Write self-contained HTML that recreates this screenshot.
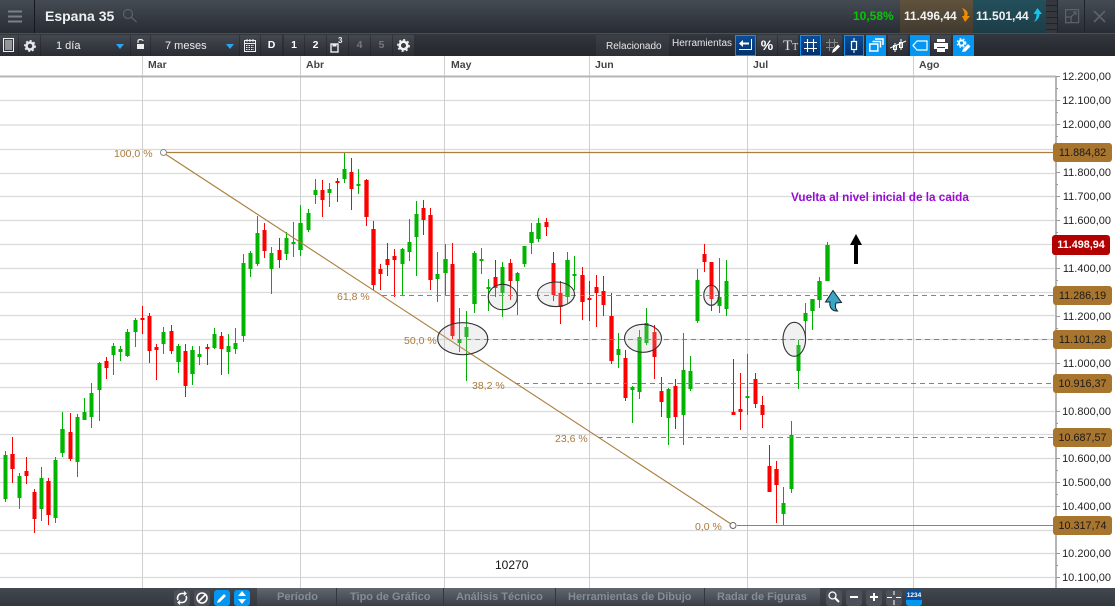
<!DOCTYPE html>
<html><head><meta charset="utf-8">
<style>
html,body{margin:0;padding:0;background:#fff}
#p{position:relative;width:1115px;height:606px;overflow:hidden;font-family:"Liberation Sans",sans-serif;background:#fff}
.a{position:absolute}
.t{position:absolute;white-space:nowrap}
#top{left:0;top:0;width:1115px;height:33px;background:linear-gradient(#454b53,#282d34)}
#tb{left:0;top:33px;width:1115px;height:23px;background:linear-gradient(#33373e,#24272c);border-top:1px solid #4a4e55;box-sizing:border-box}
.b{position:absolute;top:35px;height:21px;background:linear-gradient(#44484f,#2a2d33);color:#fff;font-size:10.5px;text-align:center;line-height:21px;font-weight:bold}
.bb{background:linear-gradient(#0a4f9a,#03306a);box-sizing:border-box;border:1px solid #0d93ee}
.bl{background:#0496f2}
#bot{left:0;top:588px;width:1115px;height:18px;background:linear-gradient(#434850,#33373e)}
#tabs{left:257px;top:588px;width:563px;height:18px;background:linear-gradient(#62676f,#3a3e46)}
.tab{position:absolute;top:590px;font-size:11px;font-weight:bold;color:#868c94;white-space:nowrap;line-height:14px}
.sq{position:absolute;top:590px;width:16px;height:16px;border-radius:3px;background:#4c5058}
.ax{position:absolute;left:1058px;width:53px;text-align:right;font-size:11px;color:#222;line-height:14px}
.pl{position:absolute;left:1053px;width:59px;height:19px;background:#a8752f;border-radius:3px;font-size:10.8px;color:#1a1a1a;text-align:center;line-height:20px}
.fb{position:absolute;font-size:10.5px;color:#a87a3a;white-space:nowrap;line-height:13px}
.m{position:absolute;top:59px;font-size:10.5px;font-weight:bold;color:#444;line-height:12px}
</style></head><body><div id="p">

<svg class="a" style="left:0;top:56px" width="1115" height="532" viewBox="0 56 1115 532">
<g stroke="#dadada" stroke-width="1.2" fill="none">
<path d="M0 100.5H1056M0 125H1056M0 149.5H1056M0 173.5H1056M0 196.5H1056M0 220.5H1056M0 244.5H1056M0 268.5H1056M0 292.5H1056M0 315.5H1056M0 339.5H1056M0 363.5H1056M0 387.5H1056M0 411.5H1056M0 434.5H1056M0 458.5H1056M0 482.5H1056M0 506.5H1056M0 530.5H1056M0 553.5H1056M0 577.5H1056"/>
</g>
<path d="M142.5 56V588M300.5 56V588M444.5 56V588M589.5 56V588M747.5 56V588M913.5 56V588" stroke="#cfcfcf" fill="none"/>
<path d="M0 76.5H1056" stroke="#b5b5b5" stroke-width="2"/>
<path d="M1056 76V588" stroke="#b5b5b5" stroke-width="2"/>
<path d="M1056 76.5h4M1056 88.5h2M1056 100.5h4M1056 112.5h2M1056 124.5h4M1056 136.5h2M1056 172.5h4M1056 184.5h2M1056 196.5h4M1056 208.5h2M1056 220.5h4M1056 232.5h2M1056 268.5h4M1056 280.5h2M1056 316.5h4M1056 328.5h2M1056 363.5h4M1056 375.5h2M1056 411.5h4M1056 423.5h2M1056 458.5h4M1056 470.5h2M1056 482.5h4M1056 494.5h2M1056 506.5h4M1056 518.5h2M1056 553.5h4M1056 565.5h2M1056 577.5h4" stroke="#999" fill="none"/>

<!-- wicks green -->
<path fill="none" stroke="#00b000" stroke-width="1" d="M5.5 451V502M19.5 473V509M41.5 467V521M55.5 457V523M62.5 412V457M77.5 414V477M84.5 398V420M91.5 383V428M99.5 362V421M113.5 343V375M120.5 346V361M127.5 329V357M135.5 318V347M163.5 327V354M178.5 344V373M192.5 346V385M199.5 346V365M214.5 328V349M228.5 334V374M235.5 328V354M243.5 254V342M250.5 251V277M257.5 216V266M271.5 247V294M286.5 232V260M293.5 222V257M300.5 205V256M308.5 209V232M315.5 179V204M329.5 183V207M344.5 153V183M358.5 169V194M402.5 248V295M409.5 219V261M416.5 201V276M437.5 252V302M445.5 244V295M459.5 308V352M466.5 311V381M474.5 251V313M481.5 248V274M488.5 279V311M502.5 262V317M517.5 272V315M524.5 246V267M531.5 223V254M538.5 218V242M567.5 252V303M574.5 256V290M618.5 333V368M632.5 386V423M639.5 330V399M646.5 308V345M668.5 388V445M683.5 333V445M690.5 356V391M697.5 269V323M719.5 258V313M726.5 260V316M747.5 354V415M783.5 487V526M791.5 421V493M798.5 340V389M805.5 303V339M812.5 299V330M819.5 277V308M827.5 242V281"/>
<!-- wicks red -->
<path fill="none" stroke="#f00" stroke-width="1" d="M12.5 437V483M26.5 457V484M34.5 489V533M48.5 478V525M70.5 413V461M106.5 357V379M142.5 306V334M149.5 313V363M156.5 344V380M171.5 325V354M185.5 344V397M207.5 344V365M221.5 332V375M264.5 223V258M279.5 238V268M322.5 180V217M337.5 178V202M351.5 158V210M366.5 179V226M373.5 221V290M380.5 264V290M387.5 243V276M394.5 249V297M423.5 200V235M430.5 208V290M452.5 243V339M495.5 260V297M510.5 259V300M546.5 218V236M553.5 252V301M560.5 281V324M582.5 267V320M589.5 281V321M596.5 275V327M603.5 276V316M611.5 293V364M625.5 350V401M654.5 325V379M661.5 377V417M675.5 379V429M704.5 244V272M711.5 262V311M733.5 359V415M740.5 373V430M755.5 373V408M762.5 396V428M769.5 445V492M776.5 461V523"/>
<!-- bodies halo -->
<path fill="none" stroke="#9be09b" stroke-width="5" d="M62.5 429V453M127.5 332V356M178.5 346V362M192.5 350V374M300.5 223V250M445.5 259V273M474.5 253V304M531.5 232V243M538.5 223V239M567.5 260V297M827.5 245V281M812.5 299V311M819.5 281V300"/>
<path fill="none" stroke="#ffb0b0" stroke-width="5" d="M12.5 454V469M48.5 481V515M366.5 180V217M373.5 229V285M430.5 215V280M582.5 275V302M611.5 316V361M776.5 469V485"/>
<!-- bodies green -->
<path fill="none" stroke="#00b400" stroke-width="4" d="M5.5 455V499M19.5 476V498M41.5 478V509M55.5 460V518M62.5 429V453M77.5 417V462M84.5 412V420M91.5 393V417M99.5 363V390M113.5 346V355M120.5 349V352M127.5 332V356M135.5 320V332M163.5 332V344M178.5 346V362M192.5 350V374M199.5 354V357M214.5 334V348M228.5 346V352M235.5 343V349M243.5 263V336M250.5 253V269M257.5 233V264M271.5 253V269M286.5 238V254M293.5 242V244M300.5 223V250M308.5 213V230M315.5 190V195M329.5 189V193M344.5 169V179M358.5 184V186M402.5 249V264M409.5 242V252M416.5 214V237M437.5 274V279M445.5 259V273M459.5 339V343M466.5 327V337M474.5 253V304M481.5 259V261M488.5 287V289M502.5 267V293M517.5 273V281M524.5 246V264M531.5 232V243M538.5 223V239M567.5 260V297M574.5 274V276M618.5 349V355M632.5 387V390M639.5 337V392M646.5 323V343M668.5 389V418M683.5 370V415M690.5 371V389M697.5 280V321M719.5 297V306M726.5 281V309M747.5 396V398M783.5 503V514M791.5 435V489M798.5 345V371M805.5 313V321M812.5 299V311M819.5 281V300M827.5 245V281"/>
<!-- bodies red -->
<path fill="none" stroke="#f00" stroke-width="4" d="M12.5 454V469M26.5 471V476M34.5 492V519M48.5 481V515M70.5 432V459M106.5 361V368M142.5 318V320M149.5 316V351M156.5 347V350M171.5 331V351M185.5 351V386M207.5 347V349M221.5 336V349M264.5 230V251M279.5 250V260M322.5 190V200M337.5 181V183M351.5 172V189M366.5 180V217M373.5 229V285M380.5 269V274M387.5 259V265M394.5 256V260M423.5 208V220M430.5 215V280M452.5 264V336M495.5 277V288M510.5 263V281M546.5 222V227M553.5 263V295M560.5 293V307M582.5 275V302M589.5 298V300M596.5 287V293M603.5 291V305M611.5 316V361M625.5 358V398M654.5 332V357M661.5 391V402M675.5 386V417M704.5 254V262M711.5 262V299M733.5 412V415M740.5 409V412M755.5 379V404M762.5 405V415M769.5 466V492M776.5 469V485"/>

<!-- fibonacci -->
<g fill="none" stroke="#ab7c3c">
<path d="M166 154.5L731 524" stroke-width="1.1"/>
<path d="M167 152.5H1056" stroke-width="1.2"/>
<path d="M737 525.5H1056" stroke-width="1"/>
<g stroke-dasharray="5 4" stroke-width="1">
<path d="M382 295.5H1056"/><path d="M466 339.5H1056"/><path d="M515 383.5H1056"/><path d="M598 437.5H1056"/>
</g>
</g>
<circle cx="163.5" cy="152.5" r="3" fill="#fff" stroke="#888"/>
<circle cx="733" cy="525.5" r="3" fill="#fff" stroke="#666"/>

<!-- ellipses -->
<g fill="rgba(190,190,190,.22)" stroke="#333" stroke-width="1.1">
<ellipse cx="462.7" cy="338.7" rx="25" ry="16"/>
<ellipse cx="502.7" cy="297" rx="14.5" ry="12.7"/>
<ellipse cx="556" cy="294.3" rx="18.5" ry="12.3"/>
<ellipse cx="643" cy="338.3" rx="18.5" ry="14"/>
<ellipse cx="711.3" cy="295.3" rx="7.5" ry="10"/>
<ellipse cx="794.3" cy="339.3" rx="11.3" ry="17"/>
</g>

<!-- arrows -->
<path d="M856 234L862 245H858V264H854V245H850Z" fill="#000"/>
<path d="M833 290.5L841.500 302.500L836 303C835 306 835.500 309 837.500 311C832 311.500 829 307 830 302L825.500 302Z" fill="#3aa6c4" stroke="#123" stroke-width="1"/>
</svg>

<!-- month labels -->
<div class="m" style="left:148px">Mar</div>
<div class="m" style="left:306px">Abr</div>
<div class="m" style="left:451px">May</div>
<div class="m" style="left:595px">Jun</div>
<div class="m" style="left:753px">Jul</div>
<div class="m" style="left:919px">Ago</div>

<!-- axis -->
<div class="ax" style="top:70px">12.200,00</div>
<div class="ax" style="top:94px">12.100,00</div>
<div class="ax" style="top:118px">12.000,00</div>
<div class="ax" style="top:166px">11.800,00</div>
<div class="ax" style="top:190px">11.700,00</div>
<div class="ax" style="top:214px">11.600,00</div>
<div class="ax" style="top:262px">11.400,00</div>
<div class="ax" style="top:310px">11.200,00</div>
<div class="ax" style="top:357px">11.000,00</div>
<div class="ax" style="top:405px">10.800,00</div>
<div class="ax" style="top:452px">10.600,00</div>
<div class="ax" style="top:476px">10.500,00</div>
<div class="ax" style="top:500px">10.400,00</div>
<div class="ax" style="top:547px">10.200,00</div>
<div class="ax" style="top:571px">10.100,00</div>

<div class="pl" style="top:143px">11.884,82</div>
<div class="pl" style="top:286px">11.286,19</div>
<div class="pl" style="top:330px">11.101,28</div>
<div class="pl" style="top:374px">10.916,37</div>
<div class="pl" style="top:428px">10.687,57</div>
<div class="pl" style="top:516px">10.317,74</div>
<div class="pl" style="top:235px;left:1052px;height:20px;width:58px;background:#b30000;color:#fff;font-weight:bold;line-height:21px">11.498,94</div>

<!-- fib labels -->
<div class="fb" style="left:114px;top:148px">100,0 %</div>
<div class="fb" style="left:337px;top:291px">61,8 %</div>
<div class="fb" style="left:404px;top:335px">50,0 %</div>
<div class="fb" style="left:472px;top:380px">38,2 %</div>
<div class="fb" style="left:555px;top:433px">23,6 %</div>
<div class="fb" style="left:695px;top:521px">0,0 %</div>

<div class="t" style="left:495px;top:558px;font-size:12px;color:#111;line-height:14px">10270</div>
<div class="t" style="left:791px;top:191px;font-size:11.75px;font-weight:bold;color:#9a0bd8;line-height:14px">Vuelta al nivel inicial de la caida</div>

<!-- top bar -->
<div id="top" class="a"></div>
<div class="a" style="left:34px;top:0;width:1px;height:33px;background:#15181c"></div>
<svg class="a" style="left:8px;top:10px" width="15" height="13"><path d="M0 1.5H14M0 6.5H14M0 11.5H14" stroke="#7b8087" stroke-width="2"/></svg>
<div class="t" style="left:45px;top:7px;font-size:14px;font-weight:bold;color:#eef0f2;line-height:18px">Espana 35</div>
<svg class="a" style="left:122px;top:8px" width="16" height="16" fill="none" stroke="#5d6269" stroke-width="1.2"><circle cx="6" cy="6" r="4.500"/><path d="M9.500 9.500L14.500 14"/></svg>
<div class="t" style="left:853px;top:8px;font-size:12px;font-weight:bold;color:#0bc20b;line-height:16px">10,58%</div>
<div class="a" style="left:900px;top:0;width:73px;height:33px;background:linear-gradient(#61533d,#3f3a30)"></div>
<div class="a" style="left:973px;top:0;width:73px;height:33px;background:linear-gradient(#23505c,#1c3d47)"></div>
<div class="t" style="left:904px;top:9px;font-size:12px;font-weight:bold;color:#f2f2f2;line-height:15px">11.496,44</div>
<div class="t" style="left:976px;top:9px;font-size:12px;font-weight:bold;color:#f2f2f2;line-height:15px">11.501,44</div>
<svg class="a" style="left:960px;top:8px" width="10" height="15"><path d="M2 0C7 2 9 5 7 8L10 8L5 14L2 8L4 8C5 5 4 3 2 0Z" fill="#f08c00"/></svg>
<svg class="a" style="left:1032px;top:8px" width="10" height="15"><path d="M5.500 0L10 6H7.500C7.500 9 6 12 2 14C4 11 4.500 9 4.500 6H1.500Z" fill="#13c6ee"/></svg>
<div class="a" style="left:1046px;top:0;width:11px;height:33px;background:linear-gradient(#34383e 0 5px,#20242a 5px 6px,#34383e 6px 11px,#20242a 11px 12px,#34383e 12px 17px,#20242a 17px 18px,#34383e 18px 23px,#20242a 23px 24px,#34383e 24px 29px,#20242a 29px 30px,#34383e 30px)"></div>
<div class="a" style="left:1057px;top:0;width:1px;height:33px;background:#20242a"></div>
<div class="a" style="left:1084px;top:0;width:1px;height:33px;background:#20242a"></div>
<svg class="a" style="left:1065px;top:9px" width="15" height="15" fill="none" stroke="#5d6269" stroke-width="1.2"><rect x=".6" y=".6" width="13" height="13"/><rect x=".6" y="8" width="5.500" height="5.600"/><path d="M6 8L11 3M8 3h3v3"/></svg>
<svg class="a" style="left:1093px;top:10px" width="13" height="13"><path d="M1 1L12 12M12 1L1 12" stroke="#5d6269" stroke-width="1.800"/></svg>

<!-- toolbar -->
<div id="tb" class="a"></div>
<div class="b" style="left:0;width:18px"></div>
<svg class="a" style="left:3px;top:38px" width="12" height="15" fill="none" stroke="#eee" stroke-width="1"><rect x=".5" y=".5" width="10" height="13"/><path d="M2 3H9M2 5H9M2 7H9M2 9H9M2 11H9"/></svg>
<div class="b" style="left:19px;width:21px"></div>
<svg class="a" style="left:24px;top:40px" width="12" height="12"><circle cx="6" cy="6" r="3.500" fill="none" stroke="#e8e8e8" stroke-width="2.500"/><circle cx="6" cy="6" r="5.200" fill="none" stroke="#e8e8e8" stroke-width="1.500" stroke-dasharray="2 2"/></svg>
<div class="b" style="left:41px;width:89px"></div>
<div class="t" style="left:56px;top:40px;font-size:11px;color:#eee;line-height:13px">1 día</div>
<svg class="a" style="left:116px;top:44px" width="8" height="5"><path d="M0 0H8L4 5Z" fill="#2aa6f0"/></svg>
<div class="b" style="left:131px;width:19px"></div>
<svg class="a" style="left:136px;top:38px" width="9" height="13" fill="none"><path d="M2 5V3C2 1 7 1 7 3" stroke="#eee" stroke-width="1.200"/><rect x="1" y="6" width="7" height="5" fill="#eee"/></svg>
<div class="b" style="left:151px;width:88px"></div>
<div class="t" style="left:165px;top:40px;font-size:11px;color:#eee;line-height:13px">7 meses</div>
<svg class="a" style="left:226px;top:44px" width="8" height="5"><path d="M0 0H8L4 5Z" fill="#2aa6f0"/></svg>
<div class="b" style="left:240px;width:20px"></div>
<svg class="a" style="left:244px;top:39px" width="12" height="13" fill="none" stroke="#eee"><rect x=".5" y="1.500" width="11" height="11"/><path d="M3 0v3M6 0v3M9 0v3M0 4.500h12" /><path d="M2 6.500h8M2 8.500h8M2 10.500h8" stroke-dasharray="1.500 1"/></svg>
<div class="b" style="left:261px;width:21px">D</div>
<div class="b" style="left:284px;width:20px">1</div>
<div class="b" style="left:305px;width:21px">2</div>
<div class="b" style="left:327px;width:21px"></div>
<svg class="a" style="left:330px;top:37px" width="15" height="17" fill="none"><rect x="1" y="7" width="7" height="8" stroke="#eee" stroke-width="1.400"/><rect x="2.500" y="7" width="4" height="2.500" fill="#eee"/></svg>
<div class="t" style="left:338px;top:36px;font-size:8px;font-weight:bold;color:#eee;line-height:9px">3</div>
<div class="b" style="left:349px;width:21px;color:#777">4</div>
<div class="b" style="left:371px;width:21px;color:#777">5</div>
<div class="b" style="left:393px;width:21px"></div>
<svg class="a" style="left:397px;top:39px" width="13" height="13"><circle cx="6.500" cy="6.500" r="3.800" fill="none" stroke="#f2f2f2" stroke-width="2.600"/><circle cx="6.500" cy="6.500" r="5.700" fill="none" stroke="#f2f2f2" stroke-width="1.500" stroke-dasharray="2 2.400"/></svg>

<div class="a" style="left:596px;top:35px;width:73px;height:21px;background:linear-gradient(#3c4046,#2d3035)"></div>
<div class="t" style="left:606px;top:40px;font-size:10px;color:#e6e6e6;line-height:13px">Relacionado</div>
<div class="t" style="left:672px;top:37px;font-size:10px;color:#e6e6e6;line-height:13px">Herramientas</div>

<div class="b bb" style="left:735px;width:21px"></div>
<svg class="a" style="left:739px;top:39px" width="14" height="13" fill="none"><path d="M0 4.500L4 1V3.500H10V5.500H4V8Z" fill="#fff"/><path d="M12.500 0V10.500H0" stroke="#fff" stroke-width="1"/></svg>
<div class="b" style="left:757px;width:20px;font-size:14px">%</div>
<div class="b" style="left:778px;width:20px"></div>
<div class="t" style="left:783px;top:38px;font-family:'Liberation Serif',serif;font-size:15px;color:#ddd;line-height:16px">T<span style="font-size:10px">T</span></div>
<div class="b bb" style="left:800px;width:21px"></div>
<svg class="a" style="left:803px;top:38px" width="15" height="15"><path d="M4.500 1V14M10.500 1V14M1 4.500H14M1 10.500H14" stroke="#fff" stroke-width="1.100"/></svg>
<div class="b" style="left:822px;width:20px"></div>
<svg class="a" style="left:825px;top:38px" width="16" height="16" fill="none"><path d="M4.500 1V13M9.500 1V9M1 4.500H13M1 9.500H9" stroke="#888" stroke-width="1"/><path d="M7 15L8 11.500L13 6.500L15 8.500L10 13.500Z" fill="#fff"/></svg>
<div class="b bb" style="left:844px;width:20px"></div>
<svg class="a" style="left:850px;top:37px" width="8" height="17" fill="none" stroke="#fff"><rect x="1.500" y="4.500" width="5" height="8" stroke-width="1.200"/><path d="M4 1V4M4 13V16"/></svg>
<div class="b bl" style="left:866px;width:20px"></div>
<svg class="a" style="left:869px;top:38px" width="15" height="14" fill="none" stroke="#fff" stroke-width="1.500"><rect x=".8" y="6" width="8" height="7"/><path d="M3.500 3.500H11.500V9.500"/><path d="M6 1H14V7"/></svg>
<div class="b" style="left:888px;width:20px"></div>
<svg class="a" style="left:890px;top:37px" width="17" height="17" fill="none" stroke="#fff"><rect x="3.500" y="8.500" width="3" height="4"/><rect x="9.500" y="5.500" width="3" height="5"/><path d="M5 6V15M11 2V13M0 11L16 4" stroke-width="1"/></svg>
<div class="b bl" style="left:910px;width:20px"></div>
<svg class="a" style="left:912px;top:40px" width="16" height="11" fill="none" stroke="#fff" stroke-width="1.200"><path d="M5 1H15V10H5L1 5.500Z"/></svg>
<div class="b" style="left:931px;width:20px"></div>
<svg class="a" style="left:934px;top:39px" width="14" height="13"><path d="M3 0H11V3H3ZM0 4H14V10H11V8H3V10H0ZM3 9H11V13H3Z" fill="#fff"/></svg>
<div class="b bl" style="left:953px;width:21px"></div>
<svg class="a" style="left:956px;top:38px" width="16" height="15"><circle cx="5.500" cy="5" r="2.600" fill="none" stroke="#fff" stroke-width="2"/><circle cx="5.500" cy="5" r="4.300" fill="none" stroke="#fff" stroke-width="1.200" stroke-dasharray="1.800 1.800"/><path d="M6 14L7 11L12 6L14.500 8.500L9.500 13.500Z" fill="#fff"/></svg>

<!-- bottom -->
<div id="bot" class="a"></div>
<div class="sq" style="left:174px"></div>
<svg class="a" style="left:176px;top:591px" width="12" height="14" fill="none" stroke="#fff" stroke-width="1.600"><path d="M2 9A4.500 4.500 0 0 1 6 2.500H9M10 5A4.500 4.500 0 0 1 6 11.500H3"/><path d="M8 0.500L10 2.500L8 4.500M4 9.500L2 11.500L4 13.500" stroke-width="1.200"/></svg>
<div class="sq" style="left:194px"></div>
<svg class="a" style="left:196px;top:592px" width="12" height="12" fill="none" stroke="#fff" stroke-width="1.600"><circle cx="6" cy="6" r="5"/><path d="M2.500 9.500L9.500 2.500"/></svg>
<div class="sq" style="left:214px;background:#0496f2"></div>
<svg class="a" style="left:216px;top:592px" width="12" height="12"><path d="M1 11L2 8L8 2L10 4L4 10Z" fill="#fff"/></svg>
<div class="sq" style="left:234px;background:#0496f2"></div>
<svg class="a" style="left:237px;top:591px" width="10" height="14"><path d="M5 0L9 5H1ZM1 8H9L5 13Z" fill="#fff"/></svg>
<div id="tabs" class="a"></div>
<div class="a" style="left:336px;top:588px;width:1px;height:18px;background:#33373e"></div>
<div class="a" style="left:443px;top:588px;width:1px;height:18px;background:#33373e"></div>
<div class="a" style="left:555px;top:588px;width:1px;height:18px;background:#33373e"></div>
<div class="a" style="left:704px;top:588px;width:1px;height:18px;background:#33373e"></div>
<div class="tab" style="left:277px">Período</div>
<div class="tab" style="left:350px">Tipo de Gráfico</div>
<div class="tab" style="left:456px">Análisis Técnico</div>
<div class="tab" style="left:568px">Herramientas de Dibujo</div>
<div class="tab" style="left:717px">Radar de Figuras</div>
<div class="sq" style="left:826px"></div>
<svg class="a" style="left:828px;top:591px" width="12" height="12" fill="none" stroke="#fff" stroke-width="1.300"><circle cx="4.500" cy="4.500" r="3.500"/><path d="M7 7L11 11" stroke-width="2"/></svg>
<div class="sq" style="left:846px"></div>
<div class="a" style="left:850px;top:596px;width:8px;height:2px;background:#fff"></div>
<div class="sq" style="left:866px"></div>
<div class="a" style="left:870px;top:596px;width:8px;height:2px;background:#fff"></div>
<div class="a" style="left:873px;top:593px;width:2px;height:8px;background:#fff"></div>
<div class="sq" style="left:886px"></div>
<svg class="a" style="left:887px;top:590px" width="14" height="15"><path d="M0 7.500H5M9 7.500H14M7 1V5M7 10V15" stroke="#fff" stroke-width="1"/></svg>
<div class="sq" style="left:906px;background:#0496f2"></div>
<div class="a" style="left:906px;top:590px;width:16px;height:10px;background:#0a4f9a;border-radius:3px 3px 0 0;color:#fff;font-size:6.500px;font-weight:bold;line-height:11px;text-align:center">1234</div>
</div></body></html>
